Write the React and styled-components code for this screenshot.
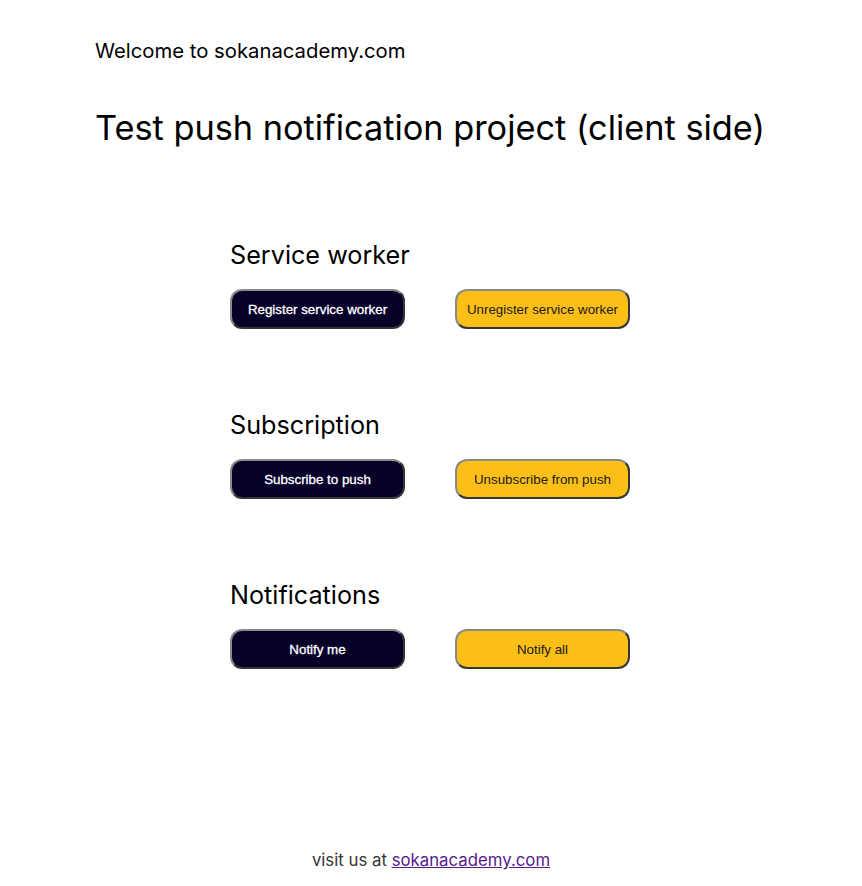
import React from 'react';
import { styled, createGlobalStyle } from 'styled-components';

const GlobalStyle = createGlobalStyle`
  body {
    margin: 0;
    background: #ffffff;
    font-family: Inter, "Noto Sans", sans-serif;
    color: #000;
  }
`;

const sections = [
  { title: 'Service worker', primary: 'Register service worker', secondary: 'Unregister service worker' },
  { title: 'Subscription', primary: 'Subscribe to push', secondary: 'Unsubscribe from push' },
  { title: 'Notifications', primary: 'Notify me', secondary: 'Notify all' },
];

export default function App() {
  return (
    <>
      <GlobalStyle />
      <Page>
        <Header>
          <Welcome>Welcome to sokanacademy.com</Welcome>
          <Title>Test push notification project (client side)</Title>
        </Header>

        <Main>
          {sections.map((s) => (
            <Section key={s.title}>
              <SectionTitle>{s.title}</SectionTitle>
              <ButtonRow>
                <ActionButton $variant="dark">{s.primary}</ActionButton>
                <ActionButton $variant="yellow">{s.secondary}</ActionButton>
              </ButtonRow>
            </Section>
          ))}
        </Main>

        <Footer>
          visit us at <FooterLink href="#">sokanacademy.com</FooterLink>
        </Footer>
      </Page>
    </>
  );
}

const Page = styled.div`
  display: flex;
  flex-direction: column;
  min-height: 886px;
  box-sizing: border-box;
`;

const Header = styled.header`
  padding: 38px 0 0 95px;
`;

const Welcome = styled.div`
  font-size: 20.3px;
  line-height: 26px;
`;

const Title = styled.h1`
  margin: 43px 0 0 0;
  font-size: 34.3px;
  font-weight: 400;
  line-height: 42px;
`;

const Main = styled.main`
  display: flex;
  flex-direction: column;
  gap: 82px;
  padding: 92px 0 0 230px;
`;

const Section = styled.section`
  display: flex;
  flex-direction: column;
  gap: 20px;
`;

const SectionTitle = styled.h2`
  margin: 0;
  font-size: 25.2px;
  font-weight: 400;
  line-height: 28px;
`;

const ButtonRow = styled.div`
  display: flex;
  gap: 50px;
`;

const ActionButton = styled.button`
  width: 175px;
  height: 40px;
  border-radius: 12px;
  border: 2px outset #8a8a8a;
  font-family: "Liberation Sans", Arial, sans-serif;
  font-size: 13.33px;
  cursor: pointer;
  background: ${(p) => (p.$variant === 'dark' ? '#070029' : '#fbbf17')};
  color: ${(p) => (p.$variant === 'dark' ? '#ffffff' : '#1a1a1a')};
  -webkit-text-stroke: ${(p) => (p.$variant === 'dark' ? '0.3px #ffffff' : '0')};
`;

const Footer = styled.footer`
  margin-top: auto;
  padding-bottom: 16px;
  text-align: center;
  font-size: 16.8px;
  color: #333;
`;

const FooterLink = styled.a`
  color: #551a8b;
  text-decoration: underline;
`;
